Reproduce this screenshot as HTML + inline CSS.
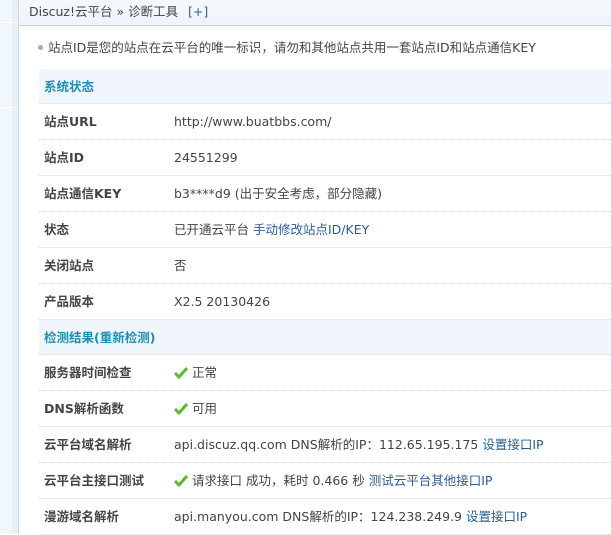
<!DOCTYPE html>
<html><head><meta charset="utf-8"><style>
*{margin:0;padding:0;box-sizing:border-box}
body{width:611px;height:534px;overflow:hidden;background:#fff;font-family:"DejaVu Sans","Noto Sans CJK SC",sans-serif;font-size:12.5px;color:#333;position:relative}
.side{position:absolute;left:0;top:0;width:19px;height:534px;background:#e8f1f8;border-right:1px solid #c5d8e8}
.side:before{content:"";position:absolute;left:0;top:0;width:12px;height:534px;background:#f2f7fb}
.side i{position:absolute;left:0;width:18px;height:1px;background:#fff}
.hd{position:absolute;left:19px;top:0;right:0;height:26px;background:linear-gradient(#f5f9fc,#edf4fa);border-bottom:1px solid #bdd0df;font-size:12.5px;line-height:16px;color:#444;padding:4px 0 0 10px}
.hd span{color:#2b5f9a;margin-left:6px}
.tip{position:absolute;left:48px;top:40px;line-height:16px;font-size:12.5px;color:#444}
.tip:before{content:"";position:absolute;left:-10px;top:5px;width:5px;height:5px;border-radius:50%;background:#aaa}
.sec{position:absolute;left:39px;right:0;height:35px;background:#f0f6fb;border-bottom:1px dotted #dcdcdc;color:#1c8fb5;font-weight:bold;font-size:12.5px;line-height:16px;padding:10px 0 0 5px}
.row{position:absolute;left:39px;right:0;height:36px;border-bottom:1px dotted #d9d9d9;font-size:12.5px;line-height:16px}
.row b{position:absolute;left:5px;top:10px;color:#444}
.row em{position:absolute;left:135px;top:10px;font-style:normal;color:#444;white-space:nowrap}
a{color:#2a5d95;text-decoration:none}
svg{vertical-align:-2px;margin-right:4px}
</style></head><body>
<div class="side"><i style="top:22px"></i><i style="top:107px"></i></div>
<div class="hd">Discuz!云平台 » 诊断工具 <span>[+]</span></div>
<div class="tip">站点ID是您的站点在云平台的唯一标识，请勿和其他站点共用一套站点ID和站点通信KEY</div>
<div class="sec" style="top:69px">系统状态</div>
<div class="row" style="top:104px"><b>站点URL</b><em>http://www.buatbbs.com/</em></div>
<div class="row" style="top:140px"><b>站点ID</b><em>24551299</em></div>
<div class="row" style="top:176px"><b>站点通信KEY</b><em>b3****d9 (出于安全考虑，部分隐藏)</em></div>
<div class="row" style="top:212px"><b>状态</b><em>已开通云平台 <a>手动修改站点ID/KEY</a></em></div>
<div class="row" style="top:248px"><b>关闭站点</b><em>否</em></div>
<div class="row" style="top:284px"><b>产品版本</b><em>X2.5 20130426</em></div>
<div class="sec" style="top:320px">检测结果(重新检测)</div>
<div class="row" style="top:355px"><b>服务器时间检查</b><em><svg width="14" height="12" viewBox="0 0 14 12"><path d="M1 6l4 4 8-9" stroke="#5cb82e" stroke-width="3" fill="none"/></svg>正常</em></div>
<div class="row" style="top:391px"><b>DNS解析函数</b><em><svg width="14" height="12" viewBox="0 0 14 12"><path d="M1 6l4 4 8-9" stroke="#5cb82e" stroke-width="3" fill="none"/></svg>可用</em></div>
<div class="row" style="top:427px"><b>云平台域名解析</b><em>api.discuz.qq.com DNS解析的IP：112.65.195.175 <a>设置接口IP</a></em></div>
<div class="row" style="top:463px"><b>云平台主接口测试</b><em><svg width="14" height="12" viewBox="0 0 14 12"><path d="M1 6l4 4 8-9" stroke="#5cb82e" stroke-width="3" fill="none"/></svg>请求接口 成功，耗时 0.466 秒 <a>测试云平台其他接口IP</a></em></div>
<div class="row" style="top:499px"><b>漫游域名解析</b><em>api.manyou.com DNS解析的IP：124.238.249.9 <a>设置接口IP</a></em></div>
</body></html>
